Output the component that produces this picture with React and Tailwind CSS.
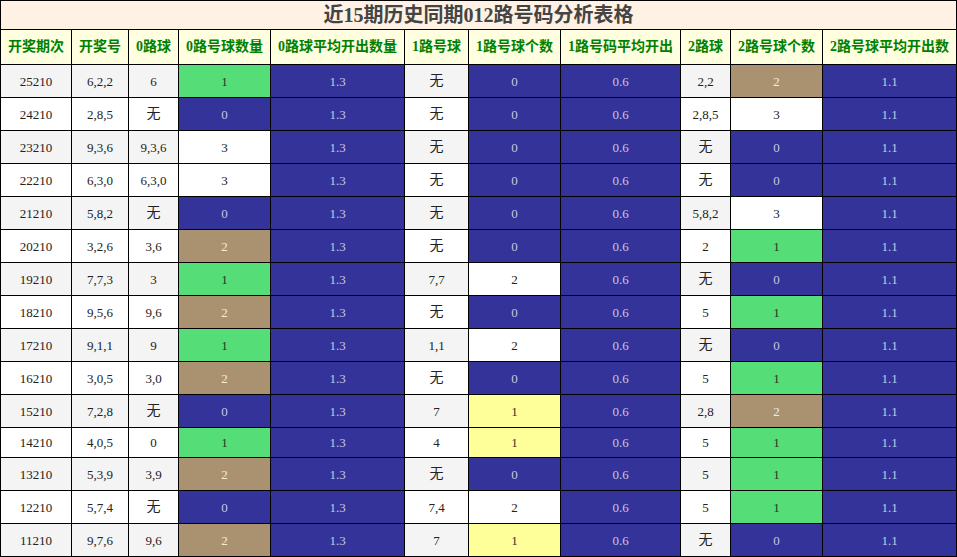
const HEAD = ['开奖期次', '开奖号', '0路球', '0路号球数量', '0路球平均开出数量', '1路号球', '1路号球个数', '1路号码平均开出', '2路球', '2路号球个数', '2路号球平均开出数']
const WIDTHS = ['w-[71px]', 'w-[57px]', 'w-[50px]', 'w-[92px]', 'w-[134px]', 'w-[64px]', 'w-[92px]', 'w-[120px]', 'w-[50px]', 'w-[92px]', 'w-[134px]']

// [期次, 开奖号, 0路球, 0路个数, 1路球, 1路个数, 2路球, 2路个数]
const ROWS = [
  ['25210', '6,2,2', '6', 1, '无', 0, '2,2', 2],
  ['24210', '2,8,5', '无', 0, '无', 0, '2,8,5', 3],
  ['23210', '9,3,6', '9,3,6', 3, '无', 0, '无', 0],
  ['22210', '6,3,0', '6,3,0', 3, '无', 0, '无', 0],
  ['21210', '5,8,2', '无', 0, '无', 0, '5,8,2', 3],
  ['20210', '3,2,6', '3,6', 2, '无', 0, '2', 1],
  ['19210', '7,7,3', '3', 1, '7,7', 2, '无', 0],
  ['18210', '9,5,6', '9,6', 2, '无', 0, '5', 1],
  ['17210', '9,1,1', '9', 1, '1,1', 2, '无', 0],
  ['16210', '3,0,5', '3,0', 2, '无', 0, '5', 1],
  ['15210', '7,2,8', '无', 0, '7', 1, '2,8', 2],
  ['14210', '4,0,5', '0', 1, '4', 1, '5', 1],
  ['13210', '5,3,9', '3,9', 2, '无', 0, '5', 1],
  ['12210', '5,7,4', '无', 0, '7,4', 2, '5', 1],
  ['11210', '9,7,6', '9,6', 2, '7', 1, '无', 0],
]

const BLUE = 'bg-[#333399] text-[#c8c8e0]'

// 0路 / 2路 个数
function countCls(n) {
  if (n === 0) return BLUE
  if (n === 1) return 'bg-[#55dd77] text-[#1c3a24]'
  if (n === 2) return 'bg-[#aa9270] text-[#f0ebe0]'
  return 'bg-white text-[#222]'
}

// 1路 个数
function countCls1(n) {
  if (n === 0) return BLUE
  if (n === 1) return 'bg-[#ffff99] text-[#333]'
  return 'bg-white text-[#222]'
}

function Cell({ children, className = '' }) {
  return <td className={`border border-black text-center align-middle p-0 ${className}`}>{children}</td>
}

export default function App() {
  return (
    <div className="w-[957px] h-[557px] overflow-hidden bg-white" style={{ fontFamily: '"Liberation Serif", "Noto Sans CJK SC", serif' }}>
      <table className="table-fixed border-collapse w-[956px] text-[13px] leading-none">
        <colgroup>
          {WIDTHS.map((w, i) => <col key={i} className={w} />)}
        </colgroup>
        <thead>
          <tr className="h-[29px]">
            <th colSpan={11} className="border border-black bg-[#fff1e3] text-[#444] text-[20px] font-bold p-0">
              近15期历史同期012路号码分析表格
            </th>
          </tr>
          <tr className="h-[35px]">
            {HEAD.map(h => (
              <th key={h} className="border border-black bg-[#ffffe0] text-[#008000] text-[14px] font-bold p-0 whitespace-nowrap">{h}</th>
            ))}
          </tr>
        </thead>
        <tbody>
          {ROWS.map((r, i) => {
            const stripe = i % 2 === 0 ? 'bg-[#f4f4f4]' : 'bg-white'
            const plain = `${stripe} text-[#222]`
            const wu = v => (v === '无' ? 'text-[14px] text-[#111]' : '')
            return (
              <tr key={r[0]} className={r[0] === '14210' ? 'h-[30px]' : 'h-[33px]'}>
                <Cell className={plain}>{r[0]}</Cell>
                <Cell className={plain}>{r[1]}</Cell>
                <Cell className={`${plain} ${wu(r[2])}`}>{r[2]}</Cell>
                <Cell className={countCls(r[3])}>{r[3]}</Cell>
                <Cell className={BLUE}>1.3</Cell>
                <Cell className={`${plain} ${wu(r[4])}`}>{r[4]}</Cell>
                <Cell className={countCls1(r[5])}>{r[5]}</Cell>
                <Cell className={BLUE}>0.6</Cell>
                <Cell className={`${plain} ${wu(r[6])}`}>{r[6]}</Cell>
                <Cell className={countCls(r[7])}>{r[7]}</Cell>
                <Cell className={BLUE}>1.1</Cell>
              </tr>
            )
          })}
        </tbody>
      </table>
    </div>
  )
}
